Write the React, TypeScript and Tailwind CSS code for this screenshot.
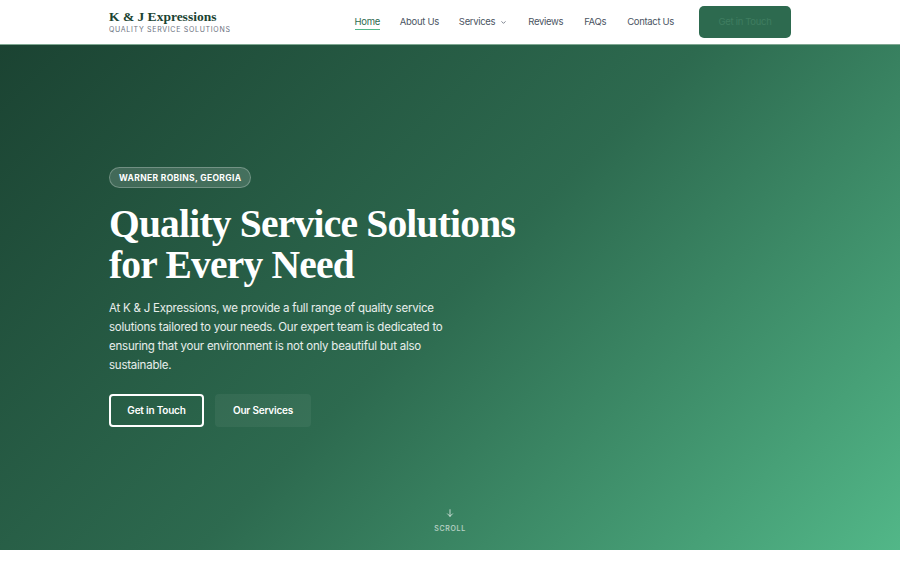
import React from "react";

export default function App() {
  return (
    <div className="w-[900px] min-h-[562px] bg-white" style={{ fontFamily: "Inter, 'Liberation Sans', sans-serif" }}>
      <header className="h-[45px] bg-white border-b border-[#7fa892] flex items-center">
        <div className="w-[682px] mx-auto flex items-center justify-between">
          <div className="flex flex-col">
            <span className="text-[13.5px] leading-[14px] font-bold text-[#1b4332]" style={{ fontFamily: "'Liberation Serif', serif" }}>
              K &amp; J Expressions
            </span>
            <span className="text-[7px] leading-[9px] tracking-[0.1em] text-[#6b7280] mt-[1px]">QUALITY SERVICE SOLUTIONS</span>
          </div>
          <nav className="flex items-center tracking-[-0.02em]">
            <a className="text-[9.5px] leading-[12px] text-[#2d6a4f] pt-[2px] pb-[1px] border-b border-[#52b788] mr-[20px]">Home</a>
            <a className="text-[9.5px] text-[#4b5563] mr-[20px]">About Us</a>
            <a className="text-[9.5px] text-[#4b5563] mr-[21px] flex items-center gap-[5px]">
              Services
              <svg width="7" height="7" viewBox="0 0 24 24" fill="none" stroke="#6b7280" strokeWidth="3" strokeLinecap="round" strokeLinejoin="round"><path d="M6 9l6 6 6-6" /></svg>
            </a>
            <a className="text-[9.5px] text-[#4b5563] mr-[21px]">Reviews</a>
            <a className="text-[9.5px] text-[#4b5563] mr-[21px]">FAQs</a>
            <a className="text-[9.5px] text-[#4b5563] mr-[25px]">Contact Us</a>
            <button className="w-[92px] h-[32px] rounded-[5px] bg-[#2d6a4f] text-[9.5px] text-[#3f7d60]">Get in Touch</button>
          </nav>
        </div>
      </header>
      <section className="relative h-[505px] pb-[5px] flex items-center" style={{ background: "linear-gradient(135deg, #1b4332 0%, #2d6a4f 50%, #52b788 100%)" }}>
        <div className="w-[682px] mx-auto">
          <div className="inline-flex items-center h-[21px] px-[9px] rounded-full bg-white/15 border border-white/25">
            <span className="text-[8.5px] font-bold tracking-[0.04em] text-white">WARNER ROBINS, GEORGIA</span>
          </div>
          <h1 className="mt-[16px] text-[39.5px] leading-[41px] font-bold tracking-[-0.02em] text-white" style={{ fontFamily: "'Liberation Serif', serif" }}>
            Quality Service Solutions
            <br />
            for Every Need
          </h1>
          <p className="mt-[13px] w-[345px] text-[11.5px] leading-[19px] tracking-[-0.02em] text-white/90">
            At K &amp; J Expressions, we provide a full range of quality service solutions tailored to your needs. Our expert team is dedicated to ensuring that your environment is not only beautiful but also sustainable.
          </p>
          <div className="mt-[19px] flex gap-[11px]">
            <button className="w-[95px] h-[33px] rounded-[4px] border-2 border-white text-white text-[10px] tracking-[-0.02em] font-semibold">Get in Touch</button>
            <button className="w-[96px] h-[33px] rounded-[4px] bg-white/5 text-white text-[10px] tracking-[-0.02em] font-semibold">Our Services</button>
          </div>
        </div>
        <div className="absolute bottom-[16px] left-0 right-0 flex flex-col items-center gap-[6px]">
          <svg width="10" height="10" viewBox="0 0 24 24" fill="none" stroke="rgba(255,255,255,0.75)" strokeWidth="2.2" strokeLinecap="round" strokeLinejoin="round"><path d="M12 4v16M6 14l6 6 6-6" /></svg>
          <span className="text-[7px] tracking-[0.1em] text-white/65 font-medium">SCROLL</span>
        </div>
      </section>
    </div>
  );
}
